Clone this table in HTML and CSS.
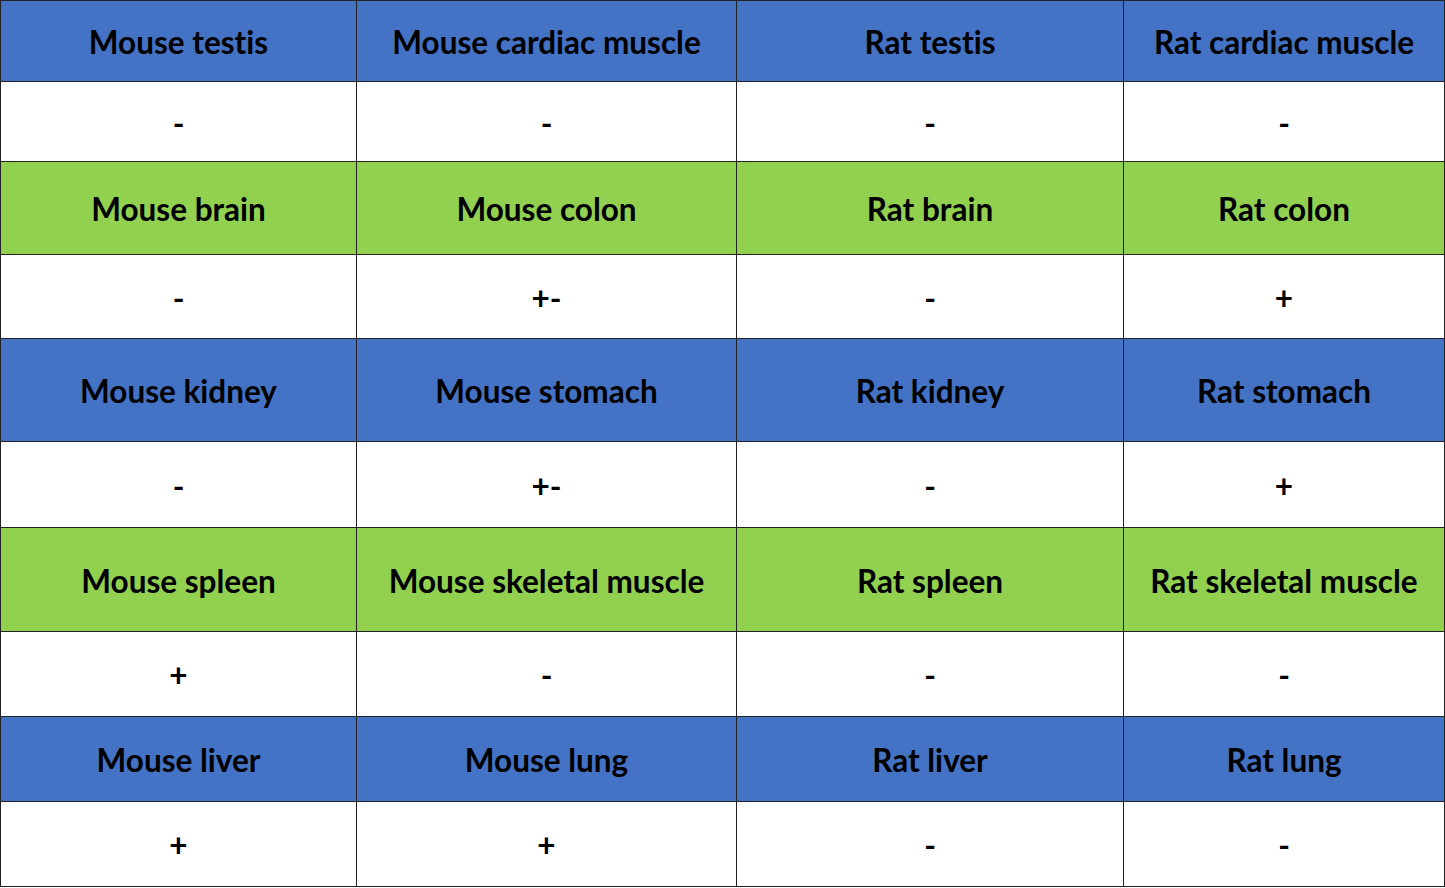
FILE: index.html
```html
<!DOCTYPE html>
<html>
<head>
<meta charset="utf-8">
<link rel="stylesheet" href="styles.css">
</head>
<body>
<table class="grid">
  <colgroup>
    <col class="c1"><col class="c2"><col class="c3"><col class="c4">
  </colgroup>
  <tr class="blue r1"><td>Mouse testis</td><td>Mouse cardiac muscle</td><td>Rat testis</td><td>Rat cardiac muscle</td></tr>
  <tr class="val r2"><td>-</td><td>-</td><td>-</td><td>-</td></tr>
  <tr class="green r3"><td>Mouse brain</td><td>Mouse colon</td><td>Rat brain</td><td>Rat colon</td></tr>
  <tr class="val r4"><td>-</td><td>+-</td><td>-</td><td>+</td></tr>
  <tr class="blue r5"><td>Mouse kidney</td><td>Mouse stomach</td><td>Rat kidney</td><td>Rat stomach</td></tr>
  <tr class="val r6"><td>-</td><td>+-</td><td>-</td><td>+</td></tr>
  <tr class="green r7"><td>Mouse spleen</td><td>Mouse skeletal muscle</td><td>Rat spleen</td><td>Rat skeletal muscle</td></tr>
  <tr class="val r8"><td>+</td><td>-</td><td>-</td><td>-</td></tr>
  <tr class="blue r9"><td>Mouse liver</td><td>Mouse lung</td><td>Rat liver</td><td>Rat lung</td></tr>
  <tr class="val r10"><td>+</td><td>+</td><td>-</td><td>-</td></tr>
</table>
</body>
</html>
```
FILE: styles.css
```css
html, body {
  margin: 0;
  padding: 0;
  background: #ffffff;
}
.grid {
  border-collapse: collapse;
  table-layout: fixed;
  width: 1444px;
  font-family: Lato, "Open Sans", sans-serif;
  font-weight: 700;
  font-size: 31.5px;
  font-variant-ligatures: none;
  color: #000;
}
.c1 { width: 356px; }
.c2 { width: 380px; }
.c3 { width: 387px; }
.c4 { width: 321px; }
.grid td {
  border: 1px solid #222222;
  text-align: center;
  vertical-align: middle;
  padding: 4px 0 0 0;
  line-height: 1;
}
.blue td { background: #4472c4; }
.green td { background: #92d050; }
.val td { background: #ffffff; }
.r1 { height: 81px; }
.r2 { height: 80px; }
.r3 { height: 93px; }
.r4 { height: 84px; }
.r5 { height: 103px; }
.r6 { height: 86px; }
.r7 { height: 104px; }
.r8 { height: 85px; }
.r9 { height: 85px; }
.r10 { height: 85px; }
```
